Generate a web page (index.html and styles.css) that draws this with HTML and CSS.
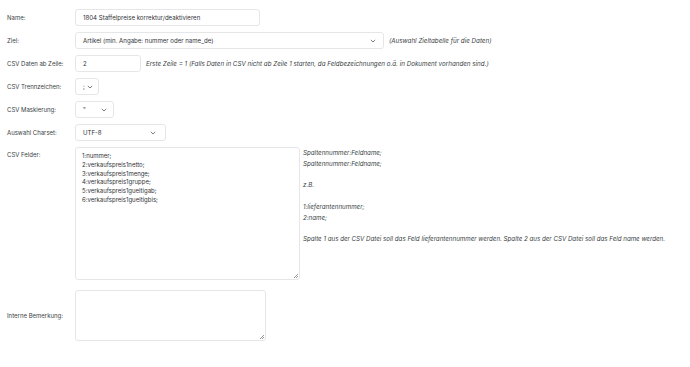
FILE: index.html
```html
<!DOCTYPE html>
<html lang="de">
<head>
    <meta charset="UTF-8">
    <meta name="viewport" content="width=device-width, initial-scale=1.0">
    <title>CSV Import</title>
    <link rel="stylesheet" href="styles.css">
</head>
<body>
    <form class="import-form">
        <div class="row">
            <label class="label">Name:</label>
            <div class="field w-name">1804 Staffelpreise korrektur/deaktivieren</div>
        </div>

        <div class="row">
            <label class="label">Ziel:</label>
            <div class="field select w-ziel">
                <span>Artikel (min. Angabe: nummer oder name_de)</span>
                <svg class="chevron" viewBox="0 0 6 4"><path d="M0.8 0.9 L3 3 L5.2 0.9"/></svg>
            </div>
            <span class="hint">(Auswahl Zieltabelle für die Daten)</span>
        </div>

        <div class="row">
            <label class="label">CSV Daten ab Zeile:</label>
            <div class="field w-zeile">2</div>
            <span class="hint">Erste Zeile = 1 (Falls Daten in CSV nicht ab Zeile 1 starten, da Feldbezeichnungen o.ä. in Dokument vorhanden sind.)</span>
        </div>

        <div class="row">
            <label class="label">CSV Trennzeichen:</label>
            <div class="field select w-trenn">
                <span>;</span>
                <svg class="chevron" viewBox="0 0 6 4"><path d="M0.8 0.9 L3 3 L5.2 0.9"/></svg>
            </div>
        </div>

        <div class="row">
            <label class="label">CSV Maskierung:</label>
            <div class="field select w-mask">
                <span>"</span>
                <svg class="chevron" viewBox="0 0 6 4"><path d="M0.8 0.9 L3 3 L5.2 0.9"/></svg>
            </div>
        </div>

        <div class="row">
            <label class="label">Auswahl Charset:</label>
            <div class="field select w-charset">
                <span>UTF-8</span>
                <svg class="chevron" viewBox="0 0 6 4"><path d="M0.8 0.9 L3 3 L5.2 0.9"/></svg>
            </div>
        </div>

        <div class="row row-top">
            <label class="label label-top">CSV Felder:</label>
            <div class="area area-felder">1:nummer;
2:verkaufspreis1netto;
3:verkaufspreis1menge;
4:verkaufspreis1gruppe;
5:verkaufspreis1gueltigab;
6:verkaufspreis1gueltigbis;</div>
            <div class="help">
                <p>Spaltennummer:Feldname;<br>Spaltennummer:Feldname;</p>
                <p>z.B.</p>
                <p>1:lieferantennummer;<br>2:name;</p>
                <p>Spalte 1 aus der CSV Datei soll das Feld lieferantennummer werden. Spalte 2 aus der CSV Datei soll das Feld name werden.</p>
            </div>
        </div>

        <div class="row row-remark">
            <label class="label">Interne Bemerkung:</label>
            <div class="area area-remark"></div>
        </div>
    </form>
</body>
</html>
```

FILE: styles.css
```css
body {
    margin: 0;
    font-family: Inter, "Noto Sans", sans-serif;
    font-size: 6px;
    color: #333;
    background: #fff;
}
.import-form {
    display: flex;
    flex-direction: column;
    gap: 6px;
    padding: 9px 7px;
}
.row {
    display: flex;
    align-items: center;
}
.row-top {
    align-items: flex-start;
}
.label {
    width: 68px;
    flex-shrink: 0;
    color: #3a3f45;
}
.label-top {
    padding-top: 4px;
}
.field {
    box-sizing: border-box;
    height: 17px;
    display: flex;
    align-items: center;
    padding: 0 7px;
    border: 1px solid #e4e6e8;
    border-radius: 3px;
    font-size: 6.1px;
    color: #2f3337;
    background: #fff;
}
.select {
    justify-content: space-between;
}
.chevron {
    width: 6px;
    height: 4px;
    fill: none;
    stroke: #555b61;
    stroke-width: 0.8;
}
.w-name { width: 185px; }
.w-ziel { width: 309px; }
.w-zeile { width: 66px; }
.w-trenn { width: 24px; padding: 0 5px 0 7px; }
.w-mask { width: 39px; padding: 0 6px 0 7px; }
.w-charset { width: 91px; padding: 0 9px 0 7px; }
.hint {
    margin-left: 5px;
    font-style: italic;
    font-size: 6.25px;
    color: #3a3f45;
}
.area {
    box-sizing: border-box;
    border: 1px solid #e4e6e8;
    border-radius: 3px;
    padding: 4px 6px;
    white-space: pre;
    line-height: 8.8px;
    color: #2f3337;
    position: relative;
}
.area::after {
    content: "";
    position: absolute;
    right: 1px;
    bottom: 1px;
    width: 4px;
    height: 4px;
    background: linear-gradient(135deg, transparent 45%, #999 45%, #999 55%, transparent 55%, transparent 70%, #999 70%, #999 80%, transparent 80%);
}
.area-felder {
    width: 225px;
    height: 133px;
}
.area-remark {
    width: 191px;
    height: 51px;
}
.help {
    margin-left: 3px;
    padding-top: 1px;
    font-style: italic;
    font-size: 6.2px;
    color: #3a3f45;
    line-height: 10.8px;
}
.help p {
    margin: 0 0 10.8px;
}
.row-remark {
    margin-top: 4px;
}
```
